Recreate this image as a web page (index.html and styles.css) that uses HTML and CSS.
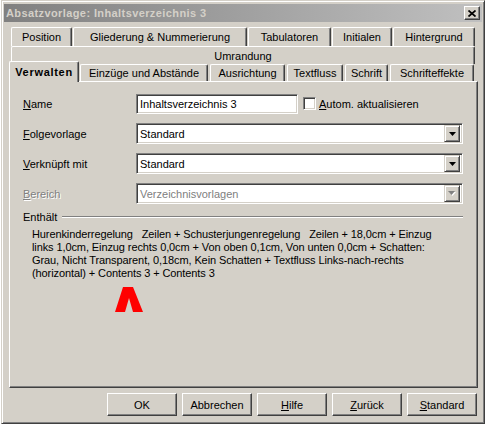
FILE: index.html
```html
<!DOCTYPE html>
<html lang="de">

<head>
    <meta charset="utf-8">
    <title>Absatzvorlage: Inhaltsverzeichnis 3</title>
    <link rel="stylesheet" href="styles.css">
</head>

<body>
    <div class="window">
        <div class="titlebar">
            <span class="title">Absatzvorlage: Inhaltsverzeichnis 3</span>
            <span class="close">
                <svg width="8" height="7" viewBox="0 0 8 7">
                    <path d="M0.5 0.5 L7.5 6.5 M7.5 0.5 L0.5 6.5" stroke="#000" stroke-width="1.7" fill="none"/>
                </svg>
            </span>
        </div>

        <div class="client">
            <!-- Registerkarten, drei Reihen -->
            <div class="tabrow row1">
                <div class="tab">Position</div>
                <div class="tab">Gliederung &amp; Nummerierung</div>
                <div class="tab">Tabulatoren</div>
                <div class="tab">Initialen</div>
                <div class="tab">Hintergrund</div>
            </div>
            <div class="tabrow row2">
                <div class="tab">Umrandung</div>
            </div>
            <div class="tabrow row3">
                <div class="tab active">Verwalten</div>
                <div class="tab">Einzüge und Abstände</div>
                <div class="tab">Ausrichtung</div>
                <div class="tab">Textfluss</div>
                <div class="tab">Schrift</div>
                <div class="tab">Schrifteffekte</div>
            </div>

            <div class="panel">
                <div class="form">
                    <label><u>N</u>ame</label>
                    <div class="field">
                        <div class="edit name">Inhaltsverzeichnis 3</div>
                        <span class="check"></span>
                        <span class="check-label"><u>A</u>utom. aktualisieren</span>
                    </div>

                    <label><u>F</u>olgevorlage</label>
                    <div class="edit combo">
                        <span class="value">Standard</span>
                        <span class="drop"><svg width="7" height="4" viewBox="0 0 7 4"><polygon points="0,0 7,0 3.5,4" fill="#000"/></svg></span>
                    </div>

                    <label><u>V</u>erknüpft mit</label>
                    <div class="edit combo">
                        <span class="value">Standard</span>
                        <span class="drop"><svg width="7" height="4" viewBox="0 0 7 4"><polygon points="0,0 7,0 3.5,4" fill="#000"/></svg></span>
                    </div>

                    <label class="disabled"><u>B</u>ereich</label>
                    <div class="edit combo disabled">
                        <span class="value">Verzeichnisvorlagen</span>
                        <span class="drop"><svg width="8" height="5" viewBox="0 0 8 5"><polygon points="1,1 8,1 4.5,5" fill="#fff"/><polygon points="0,0 7,0 3.5,4" fill="#808080"/></svg></span>
                    </div>
                </div>

                <div class="group">
                    <div class="group-title"><span>Enthält</span><div class="rule"></div></div>
                    <p class="summary">Hurenkinderregelung   Zeilen + Schusterjungenregelung   Zeilen + 18,0cm + Einzug
links 1,0cm, Einzug rechts 0,0cm + Von oben 0,1cm, Von unten 0,0cm + Schatten:
Grau, Nicht Transparent, 0,18cm, Kein Schatten + Textfluss Links-nach-rechts
(horizontal) + Contents 3 + Contents 3</p>
                </div>

                <!-- rote Markierung unter dem Text -->
                <svg class="marker" width="28" height="25" viewBox="0 0 28 25">
                    <polygon points="0,25 8,0 18,0 28,25 18,25 14,11 10,25" fill="#ff0000"/>
                </svg>
            </div>

            <div class="buttons">
                <button class="btn">OK</button>
                <button class="btn">Abbrechen</button>
                <button class="btn"><u>H</u>ilfe</button>
                <button class="btn"><u>Z</u>urück</button>
                <button class="btn"><u>S</u>tandard</button>
            </div>
        </div>
    </div>
</body>

</html>
```

FILE: styles.css
```css
* {
    margin: 0;
    padding: 0;
    box-sizing: border-box;
}

body {
    background: #fff;
    font: 11px "Liberation Sans", Arial, sans-serif;
    color: #000;
}

.window {
    margin-left: 1px;
    width: 484px;
    height: 424px;
    background: #d4d0c8;
    border: 1px solid;
    border-color: #d4d0c8 #404040 #404040 #d4d0c8;
    box-shadow: inset 1px 1px #fff, inset -1px -1px #808080;
    padding: 3px 2px 2px 2px;
}

.titlebar {
    height: 18px;
    display: flex;
    align-items: center;
    justify-content: space-between;
    padding-left: 2px;
    background: linear-gradient(to right, #808080, #c0c0c0);
}

.title {
    color: #d4d0c8;
    font-weight: bold;
    letter-spacing: 0.4px;
}

.close {
    width: 16px;
    height: 14px;
    margin-right: 2px;
    display: flex;
    align-items: center;
    justify-content: center;
    background: #d4d0c8;
    border: 1px solid;
    border-color: #fff #404040 #404040 #fff;
    box-shadow: inset -1px -1px #808080;
}

.client {
    padding: 5px 4px 0 5px;
}

/* Registerkarten */
.tabrow {
    display: grid;
}

.row1 {
    margin-left: 2px;
    height: 19px;
    grid-template-columns: 61px 174px 83px 60px 82px;
    column-gap: 1px;
}

.row2 {
    margin-left: 2px;
    width: 464px;
    height: 18px;
}

.row3 {
    height: 17px;
    grid-template-rows: 17px;
    grid-template-columns: 70px 130px 77px 58px 45px 86px;
}

.tab {
    display: flex;
    align-items: center;
    justify-content: center;
    white-space: nowrap;
    background: #d4d0c8;
    border-top: 1px solid #fff;
    border-left: 1px solid #fff;
    border-right: 1px solid #404040;
    box-shadow: inset -1px 0 #808080;
    border-radius: 2px 2px 0 0;
}

.row3 .tab {
    margin: 0 1px;
}

.tab.active {
    position: relative;
    z-index: 1;
    align-self: end;
    height: 21px;
    margin: 0 0 -1px 0;
    font-weight: bold;
    letter-spacing: 0.7px;
    padding-bottom: 1px;
}

.panel {
    position: relative;
    height: 307px;
    border: 1px solid;
    border-color: #fff #404040 #404040 #fff;
    box-shadow: inset -1px -1px #808080;
    padding: 11px 14px 0 13px;
}

/* Eingabefelder */
.form {
    display: grid;
    grid-template-columns: 113px 1fr;
    grid-auto-rows: 21px;
    row-gap: 9px;
    align-items: center;
}

.disabled {
    color: #808080;
}

label.disabled {
    text-shadow: 1px 1px #fff;
}

.field {
    display: flex;
    align-items: center;
}

.edit {
    height: 21px;
    display: flex;
    align-items: center;
    background: #fff;
    border: 1px solid;
    border-color: #808080 #fff #fff #808080;
    box-shadow: inset 1px 1px #404040, inset -1px -1px #d4d0c8;
    padding-left: 2px;
    white-space: nowrap;
}

.edit.name {
    width: 162px;
    height: 20px;
    padding-left: 3px;
}

.check {
    width: 13px;
    height: 13px;
    margin-left: 5px;
    background: #fff;
    border: 1px solid;
    border-color: #808080 #fff #fff #808080;
    box-shadow: inset 1px 1px #404040, inset -1px -1px #d4d0c8;
}

.check-label {
    margin-left: 3px;
}

.combo {
    padding: 2px;
}

.combo .value {
    flex: 1;
    padding-left: 1px;
}

.drop {
    width: 16px;
    height: 17px;
    display: flex;
    align-items: center;
    justify-content: center;
    background: #d4d0c8;
    border: 1px solid;
    border-color: #d4d0c8 #404040 #404040 #d4d0c8;
    box-shadow: inset 1px 1px #fff, inset -1px -1px #808080;
}

/* Enthält */
.group {
    margin-top: 6px;
}

.group-title {
    display: flex;
    align-items: center;
    height: 13px;
}

.group-title .rule {
    flex: 1;
    margin-left: 5px;
    border-top: 1px solid #808080;
    border-bottom: 1px solid #fff;
}

.summary {
    margin-top: 5px;
    padding-left: 9px;
    line-height: 13px;
    letter-spacing: -0.1px;
    white-space: pre;
}

.marker {
    position: absolute;
    left: 105px;
    top: 205px;
}

/* Schaltflächen */
.buttons {
    display: flex;
    justify-content: flex-end;
    gap: 5px;
    margin-top: 5px;
    padding-right: 1px;
}

.btn {
    width: 70px;
    height: 23px;
    font: inherit;
    color: #000;
    background: #d4d0c8;
    border: 1px solid;
    border-color: #fff #404040 #404040 #fff;
    box-shadow: inset -1px -1px #808080;
}
```
